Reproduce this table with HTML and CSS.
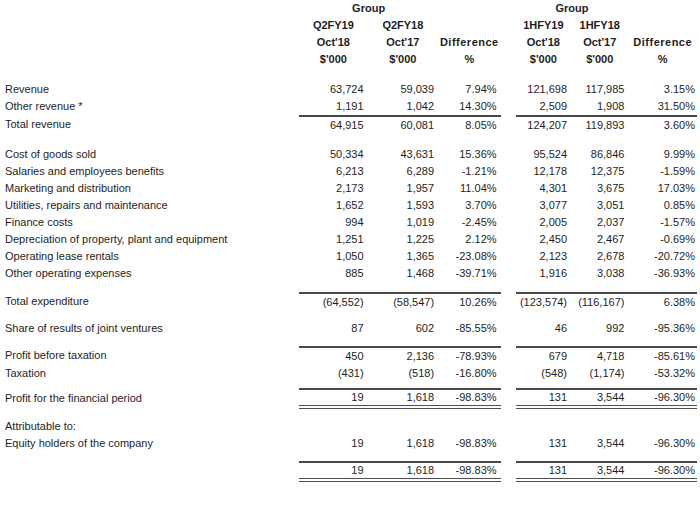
FILE: index.html
```html
<!DOCTYPE html>
<html>
<head>
<meta charset="utf-8">
<link rel="stylesheet" href="styles.css">
</head>
<body>
<table class="pl">
  <colgroup>
    <col class="c-label"><col class="c-a"><col class="c-b"><col class="c-d"><col class="c-gap"><col class="c-e"><col class="c-f"><col class="c-g">
  </colgroup>
  <thead>
    <tr class="hrow">
      <th></th><th colspan="2" class="grp grp1">Group</th><th></th><th></th><th colspan="2" class="grp grp2">Group</th><th></th>
    </tr>
    <tr class="hrow">
      <th></th><th class="h1">Q2FY19</th><th class="h2">Q2FY18</th><th></th><th></th><th class="h4">1HFY19</th><th class="h5">1HFY18</th><th></th>
    </tr>
    <tr class="hrow">
      <th></th><th class="h1">Oct'18</th><th class="h2">Oct'17</th><th class="h3 diff">Difference</th><th></th><th class="h4">Oct'18</th><th class="h5">Oct'17</th><th class="h6 diff">Difference</th>
    </tr>
    <tr class="hrow">
      <th></th><th class="h1">$'000</th><th class="h2">$'000</th><th class="h3">%</th><th></th><th class="h4">$'000</th><th class="h5">$'000</th><th class="h6">%</th>
    </tr>
  </thead>
  <tbody>
    <tr class="sp sp13"><td colspan="8"></td></tr>
    <tr><td>Revenue</td><td>63,724</td><td>59,039</td><td>7.94%</td><td></td><td>121,698</td><td>117,985</td><td>3.15%</td></tr>
    <tr><td>Other revenue *</td><td>1,191</td><td>1,042</td><td>14.30%</td><td></td><td>2,509</td><td>1,908</td><td>31.50%</td></tr>
    <tr class="top"><td>Total revenue</td><td>64,915</td><td>60,081</td><td>8.05%</td><td></td><td>124,207</td><td>119,893</td><td>3.60%</td></tr>

    <tr class="sp sp12"><td colspan="8"></td></tr>
    <tr><td>Cost of goods sold</td><td>50,334</td><td>43,631</td><td>15.36%</td><td></td><td>95,524</td><td>86,846</td><td>9.99%</td></tr>
    <tr><td>Salaries and employees benefits</td><td>6,213</td><td>6,289</td><td>-1.21%</td><td></td><td>12,178</td><td>12,375</td><td>-1.59%</td></tr>
    <tr><td>Marketing and distribution</td><td>2,173</td><td>1,957</td><td>11.04%</td><td></td><td>4,301</td><td>3,675</td><td>17.03%</td></tr>
    <tr><td>Utilities, repairs and maintenance</td><td>1,652</td><td>1,593</td><td>3.70%</td><td></td><td>3,077</td><td>3,051</td><td>0.85%</td></tr>
    <tr><td>Finance costs</td><td>994</td><td>1,019</td><td>-2.45%</td><td></td><td>2,005</td><td>2,037</td><td>-1.57%</td></tr>
    <tr><td>Depreciation of property, plant and equipment</td><td>1,251</td><td>1,225</td><td>2.12%</td><td></td><td>2,450</td><td>2,467</td><td>-0.69%</td></tr>
    <tr><td>Operating lease rentals</td><td>1,050</td><td>1,365</td><td>-23.08%</td><td></td><td>2,123</td><td>2,678</td><td>-20.72%</td></tr>
    <tr><td>Other operating expenses</td><td>885</td><td>1,468</td><td>-39.71%</td><td></td><td>1,916</td><td>3,038</td><td>-36.93%</td></tr>

    <tr class="sp sp10"><td colspan="8"></td></tr>
    <tr class="top"><td>Total expenditure</td><td>(64,552)</td><td>(58,547)</td><td>10.26%</td><td></td><td>(123,574)</td><td>(116,167)</td><td>6.38%</td></tr>

    <tr class="sp sp9"><td colspan="8"></td></tr>
    <tr><td>Share of results of joint ventures</td><td>87</td><td>602</td><td>-85.55%</td><td></td><td>46</td><td>992</td><td>-95.36%</td></tr>

    <tr class="sp sp9"><td colspan="8"></td></tr>
    <tr class="top"><td>Profit before taxation</td><td>450</td><td>2,136</td><td>-78.93%</td><td></td><td>679</td><td>4,718</td><td>-85.61%</td></tr>
    <tr><td>Taxation</td><td>(431)</td><td>(518)</td><td>-16.80%</td><td></td><td>(548)</td><td>(1,174)</td><td>-53.32%</td></tr>

    <tr class="sp sp6"><td colspan="8"></td></tr>
    <tr class="top dbl"><td>Profit for the financial period</td><td>19</td><td>1,618</td><td>-98.83%</td><td></td><td>131</td><td>3,544</td><td>-96.30%</td></tr>

    <tr class="sp sp9"><td colspan="8"></td></tr>
    <tr><td>Attributable to:</td><td></td><td></td><td></td><td></td><td></td><td></td><td></td></tr>
    <tr><td>Equity holders of the company</td><td>19</td><td>1,618</td><td>-98.83%</td><td></td><td>131</td><td>3,544</td><td>-96.30%</td></tr>

    <tr class="sp sp9"><td colspan="8"></td></tr>
    <tr class="top dbl"><td></td><td>19</td><td>1,618</td><td>-98.83%</td><td></td><td>131</td><td>3,544</td><td>-96.30%</td></tr>
  </tbody>
</table>
</body>
</html>
```

FILE: styles.css
```css
html, body {
  margin: 0;
  padding: 0;
  background: #ffffff;
}

body {
  font-family: "Liberation Sans", Arial, sans-serif;
  font-size: 11px;
  color: #1e1e1e;
}

.pl {
  border-collapse: separate;
  border-spacing: 0;
  table-layout: fixed;
  width: 692px;
  margin-left: 5px;
}

.c-label { width: 292px; }
.c-a { width: 68px; }
.c-b { width: 70px; }
.c-d { width: 62px; }
.c-gap { width: 15px; }
.c-e { width: 55px; }
.c-f { width: 57px; }
.c-g { width: 68px; }

.pl th,
.pl td {
  padding: 0;
  height: 17px;
  line-height: 17px;
  white-space: nowrap;
  vertical-align: middle;
}

.pl th {
  font-weight: bold;
  text-align: center;
}

.pl .sp td {
  height: auto;
  line-height: 0;
  padding: 0;
}

.sp6 { height: 6px; }
.sp7 { height: 7px; }
.sp9 { height: 9px; }
.sp10 { height: 10px; }
.sp12 { height: 12px; }
.sp13 { height: 13px; }

.pl td {
  text-align: right;
  padding-right: 4px;
}

.pl td:first-child {
  text-align: left;
  padding-right: 0;
}

.pl td:nth-child(8) {
  padding-right: 2px;
}

.pl .dbl td {
  height: 15px;
  line-height: 15px;
}

.grp1 { padding-left: 4px; }
.grp2 { padding-left: 4px; }
.h1 { padding-left: 6px; }
.h2 { padding-left: 10px; }
.h3 { padding-left: 2px; }
.h4 { padding-left: 0; }
.h5 { padding-left: 8px; }
.h6 { padding-left: 6px; }

.diff { letter-spacing: 0.5px; }

.top td:nth-child(2),
.top td:nth-child(3),
.top td:nth-child(4),
.top td:nth-child(6),
.top td:nth-child(7),
.top td:nth-child(8) {
  border-top: 2px solid #4a4a4a;
}

.dbl td:nth-child(2),
.dbl td:nth-child(3),
.dbl td:nth-child(4),
.dbl td:nth-child(6),
.dbl td:nth-child(7),
.dbl td:nth-child(8) {
  border-bottom: 4px double #505050;
}
```
